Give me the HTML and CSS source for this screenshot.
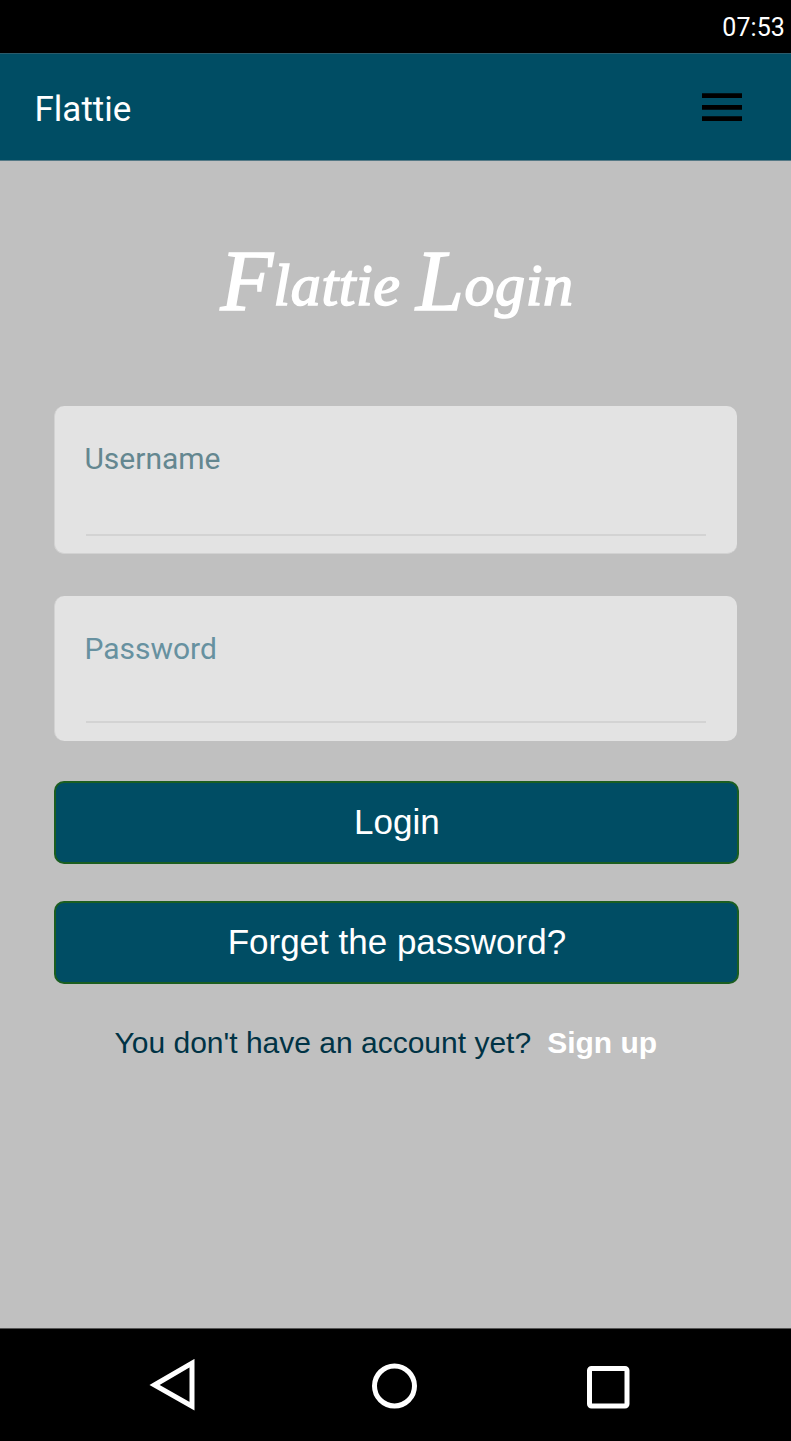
FILE: index.html
```html
<!DOCTYPE html>
<html lang="en">
<head>
<meta charset="utf-8">
<title>Flattie Login</title>
<link rel="stylesheet" href="styles.css">
</head>
<body>
<div class="status"><span class="clock">07:53</span></div>
<header class="toolbar">
  <span class="brand">Flattie</span>
  <svg class="menu" width="40" height="28" viewBox="0 0 40 28"><path d="M0 2.7H40M0 14.3H40M0 25.7H40" stroke="#000" stroke-width="4.7"/></svg>
</header>
<main class="content">
  <h1 class="title"><span class="cap">F</span>lattie <span class="cap">L</span>ogin</h1>
  <form class="form">
    <div class="field field-user"><label class="label">Username</label><div class="line"></div></div>
    <div class="field field-pass"><label class="label">Password</label><div class="line"></div></div>
    <button class="button" type="button">Login</button>
    <button class="button" type="button">Forget the password?</button>
  </form>
  <p class="signup"><span class="question">You don't have an account yet?</span><a class="link">Sign up</a></p>
</main>
<nav class="navbar">
  <svg class="back" width="46" height="52" viewBox="0 0 46 52"><path d="M5.5 26L43 4.2V47.2Z" fill="none" stroke="#fff" stroke-width="5"/></svg>
  <svg class="home" width="46" height="46" viewBox="0 0 46 46"><circle cx="23.5" cy="23" r="20" fill="none" stroke="#fff" stroke-width="5"/></svg>
  <svg class="recent" width="43" height="43" viewBox="0 0 43 43"><rect x="2.5" y="2.5" width="37.5" height="37.5" rx="2" fill="none" stroke="#fff" stroke-width="5"/></svg>
</nav>
</body>
</html>
```
FILE: styles.css
```css
* { box-sizing: border-box; }
body { margin: 0; width: 791px; height: 1441px; display: flex; flex-direction: column; background: #c0c0c0; font-family: "Liberation Sans", Arial, sans-serif; overflow: hidden; }
.status { height: 53px; flex: none; background: #000; color: #fff; display: flex; justify-content: flex-end; align-items: center; padding: 2px 6px 0 0; }
.clock { font: 25px/30px Roboto, sans-serif; letter-spacing: 0.1px; }
.toolbar { height: 108px; flex: none; background: #004d64; border-top: 1px solid #2b5b6b; border-bottom: 1px solid #547986; display: flex; justify-content: space-between; align-items: center; padding: 0 49px 0 34.5px; }
.brand { color: #fff; font: 35px/42px Roboto, sans-serif; padding-top: 5px; }
.menu { display: block; }
.content { flex: 1; display: flex; flex-direction: column; padding: 77px 51px 0 54px; }
.title { margin: 0; height: 100px; color: #fff; text-align: center; white-space: nowrap; font: italic 400 60px/82px "Liberation Serif", cursive; letter-spacing: 0.6px; -webkit-text-stroke: 1.6px #fff; }
.cap { font-size: 86px; line-height: 1; vertical-align: -5px; }
.form { display: flex; flex-direction: column; margin-top: 68px; }
.field { width: 683px; border-radius: 10px; background: #e3e3e3; border-left: 1px solid #d2d2d2; padding: 34px 31px 0 30px; display: flex; flex-direction: column; justify-content: space-between; }
.field-user { height: 148px; padding-bottom: 17px; border-bottom: 1px solid #d2d2d2; color: #648790; }
.field-pass { height: 145px; margin-top: 42px; padding-bottom: 18px; color: #6791a0; }
.label { font: 30px/38px Roboto, sans-serif; margin-left: -0.6px; }
.line { height: 2px; margin-left: 1px; background: #d3d3d3; }
.button { width: 685px; height: 82.5px; margin: 40px 0 0 0.4px; padding: 0 0 1px; border: 2px solid #1b5e20; border-radius: 10px; background: #004d64; color: #fff; font: 35px/40px "Liberation Sans", Arial, sans-serif; }
.button + .button { margin-top: 37.5px; }
.signup { margin: 41px 0 0; padding-left: 60.5px; display: flex; gap: 16px; font-size: 30px; line-height: 36px; white-space: nowrap; }
.question { color: #003345; }
.link { color: #fff; font-weight: 700; }
.navbar { height: 113px; flex: none; background: #000; border-top: 1px solid #555; display: flex; align-items: flex-start; padding: 30px 0 0 149px; }
.home { margin: 4px 0 0 176px; }
.recent { margin: 7px 0 0 170px; }
```
